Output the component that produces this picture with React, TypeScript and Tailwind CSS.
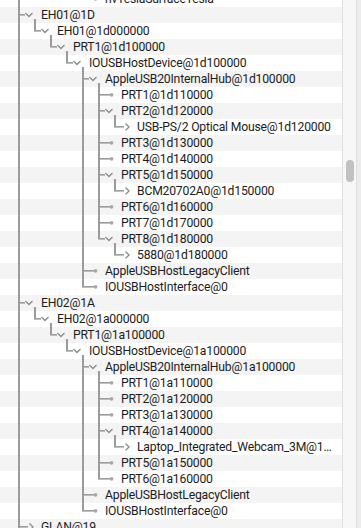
import React from "react"

type Kind = "open" | "closed" | "leaf"
type Row = [number, string, Kind]

// index 0 is the half-hidden row above EH01 (list is scrolled)
const ROWS: Row[] = [
  [4, "nvTeslaSurfaceTesla", "leaf"],
  [0, "EH01@1D", "open"],
  [1, "EH01@1d000000", "open"],
  [2, "PRT1@1d100000", "open"],
  [3, "IOUSBHostDevice@1d100000", "open"],
  [4, "AppleUSB20InternalHub@1d100000", "open"],
  [5, "PRT1@1d110000", "leaf"],
  [5, "PRT2@1d120000", "open"],
  [6, "USB-PS/2 Optical Mouse@1d120000", "closed"],
  [5, "PRT3@1d130000", "leaf"],
  [5, "PRT4@1d140000", "leaf"],
  [5, "PRT5@1d150000", "open"],
  [6, "BCM20702A0@1d150000", "closed"],
  [5, "PRT6@1d160000", "leaf"],
  [5, "PRT7@1d170000", "leaf"],
  [5, "PRT8@1d180000", "open"],
  [6, "5880@1d180000", "closed"],
  [4, "AppleUSBHostLegacyClient", "leaf"],
  [4, "IOUSBHostInterface@0", "leaf"],
  [0, "EH02@1A", "open"],
  [1, "EH02@1a000000", "open"],
  [2, "PRT1@1a100000", "open"],
  [3, "IOUSBHostDevice@1a100000", "open"],
  [4, "AppleUSB20InternalHub@1a100000", "open"],
  [5, "PRT1@1a110000", "leaf"],
  [5, "PRT2@1a120000", "leaf"],
  [5, "PRT3@1a130000", "leaf"],
  [5, "PRT4@1a140000", "open"],
  [6, "Laptop_Integrated_Webcam_3M@1a140000", "closed"],
  [5, "PRT5@1a150000", "leaf"],
  [5, "PRT6@1a160000", "leaf"],
  [4, "AppleUSBHostLegacyClient", "leaf"],
  [4, "IOUSBHostInterface@0", "leaf"],
  [0, "GLAN@19", "closed"],
]

const LINE = "#9b9b9b"

// does a later row sit at depth `col` before the tree climbs above it?
function continues(i: number, col: number) {
  for (let j = i + 1; j < ROWS.length; j++) {
    const d = ROWS[j][0]
    if (d < col) return false
    if (d === col) return true
  }
  return col === 0
}

function Connector({ kind, more }: { kind: Kind; more: boolean }) {
  return (
    <svg width="29" height="16" viewBox="0 0 29 16" className="shrink-0">
      <rect x="6" y="0" width="2" height={more ? 16 : 8} fill={LINE} />
      {kind === "leaf" && (
        <>
          <rect x="6" y="7" width="12" height="1.6" fill={LINE} />
          <circle cx="19.5" cy="7.8" r="1.9" fill="#a9a9a9" />
        </>
      )}
      {kind === "open" && (
        <>
          <rect x="6" y="7" width="7" height="1.6" fill={LINE} />
          <polyline points="13.5,6 17,9.5 20.5,6" fill="none" stroke="#8a8a8a" strokeWidth="1.3" />
          <rect x="22" y="12" width="2" height="4" fill={LINE} />
        </>
      )}
      {kind === "closed" && (
        <>
          <rect x="6" y="7" width="10" height="1.6" fill={LINE} />
          <polyline points="17.5,4.5 21,8 17.5,11.5" fill="none" stroke="#8a8a8a" strokeWidth="1.3" />
        </>
      )}
    </svg>
  )
}

export default function App() {
  return (
    <div className="flex h-[528px] w-[361px] overflow-hidden bg-white font-['Roboto','Liberation_Sans',sans-serif]">
      <div className="min-w-0 flex-1 overflow-hidden">
        <div className="-mt-[9px] flex flex-col">
          {ROWS.map(([depth, name, kind], i) => (
            <div
              key={i}
              className={`flex h-4 shrink-0 items-center pl-3 ${i % 2 === 1 ? "bg-[#f4f4f4]" : "bg-white"}`}
            >
              {Array.from({ length: depth }).map((_, c) => (
                <div key={c} className="h-full w-4 shrink-0">
                  {continues(i, c) && <div className="ml-[6px] h-full w-[2px] bg-[#9b9b9b]" />}
                </div>
              ))}
              <Connector kind={kind} more={continues(i, depth)} />
              <span className="min-w-0 truncate pr-[4px] text-[12.2px] leading-4 tracking-[-0.2px] text-[#1c1c1c]">{name}</span>
            </div>
          ))}
        </div>
      </div>
      <div className="w-[14px] shrink-0 border-l border-[#e0e0e0] bg-[#f7f7f7] pt-[160px] pl-[3px]">
        <div className="h-[22px] w-2 rounded-full bg-[#c1c1c1]" />
      </div>
      <div className="w-[5px] shrink-0 border-l border-[#dedede] bg-[#ececec]" />
    </div>
  )
}
